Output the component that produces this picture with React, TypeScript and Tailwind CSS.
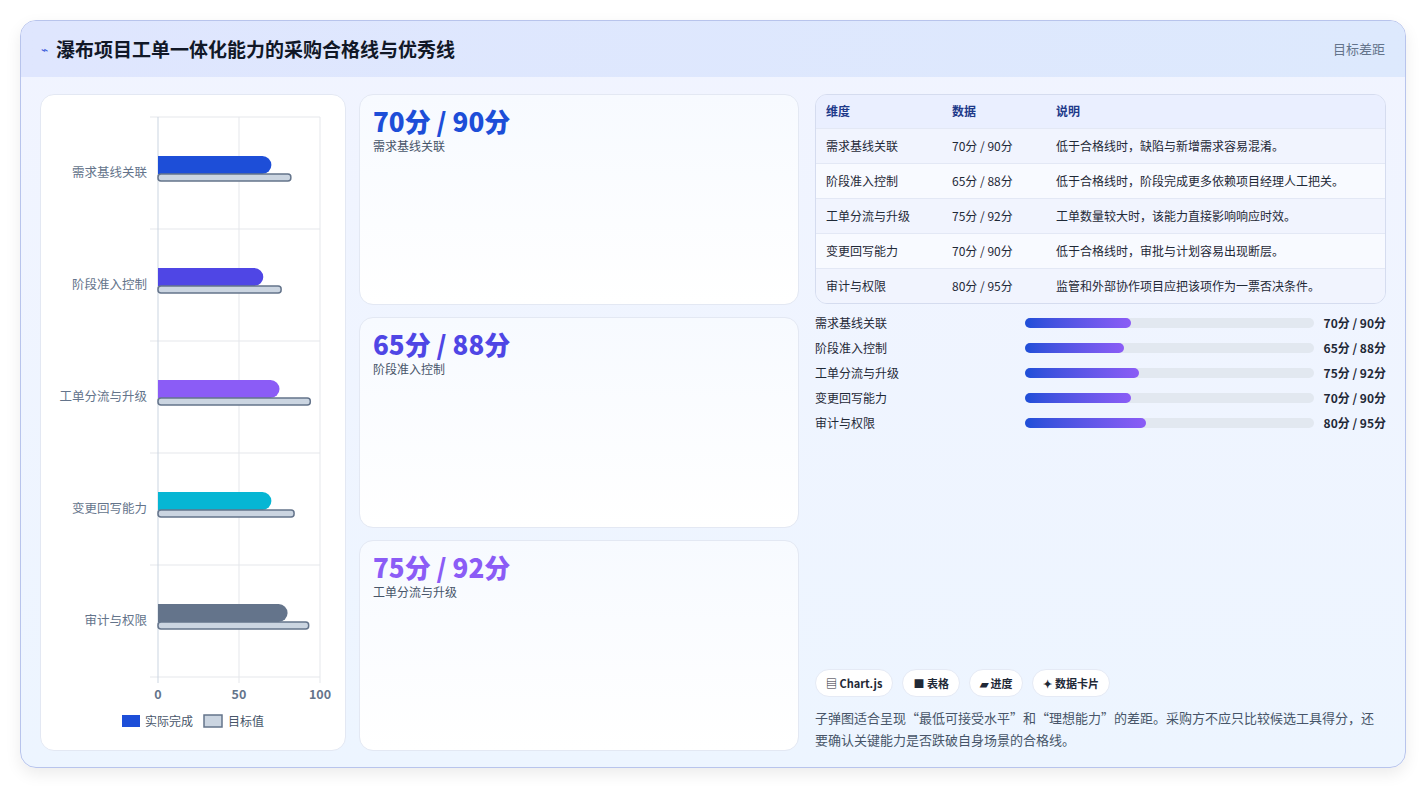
const font = { fontFamily: '"Noto Sans CJK SC", "Noto Sans", sans-serif' }

const rows = [
	{ name: '需求基线关联', data: '70分 / 90分', note: '低于合格线时，缺陷与新增需求容易混淆。', actual: 70, target: 82, color: '#1d4ed8', pct: 36.7 },
	{ name: '阶段准入控制', data: '65分 / 88分', note: '低于合格线时，阶段完成更多依赖项目经理人工把关。', actual: 65, target: 76, color: '#4f46e5', pct: 34.2 },
	{ name: '工单分流与升级', data: '75分 / 92分', note: '工单数量较大时，该能力直接影响响应时效。', actual: 75, target: 94, color: '#8b5cf6', pct: 39.4 },
	{ name: '变更回写能力', data: '70分 / 90分', note: '低于合格线时，审批与计划容易出现断层。', actual: 70, target: 84, color: '#06b6d4', pct: 36.7 },
	{ name: '审计与权限', data: '80分 / 95分', note: '监管和外部协作项目应把该项作为一票否决条件。', actual: 80, target: 93, color: '#64748b', pct: 41.9 },
]

const Chart = () => {
	const x0 = 117
	const w = 162
	const top = 22
	const band = 112
	return (
		<svg width="305" height="655" viewBox="0 0 305 655">
			{[0, 1, 2, 3, 4, 5].map((i) => (
				<line key={i} x1={x0 - 8} x2={x0 + w} y1={top + i * band} y2={top + i * band} stroke="#e5e7eb" />
			))}
			{[0, 0.5, 1].map((f, i) => (
				<line key={i} x1={x0 + f * w} x2={x0 + f * w} y1={top} y2={top + 5 * band + 6} stroke={i === 0 ? '#cbd5e1' : '#e5e7eb'} />
			))}
			{rows.map((r, i) => {
				const cy = top + i * band + 56
				return (
					<g key={r.name}>
						<text x={106} y={cy + 4} textAnchor="end" fontSize="12.5" fill="#64748b">{r.name}</text>
						<path d={`M${x0} ${cy - 17} H${x0 + (r.actual * w) / 100 - 9} a9 9 0 0 1 0 18 H${x0} Z`} fill={r.color} />
						<rect x={x0} y={cy + 1} width={(r.target * w) / 100} height={7} rx={3} fill="#cbd5e1" stroke="#64748b" strokeWidth="1.5" />
					</g>
				)
			})}
			{[0, 50, 100].map((v, i) => (
				<text key={v} x={x0 + (v * w) / 100} y={604} textAnchor="middle" fontSize="12.5" fontWeight="700" fill="#64748b">{v}</text>
			))}
			<rect x={81} y={620} width={18} height={12} fill="#1d4ed8" />
			<text x={104} y={631} fontSize="12" fill="#475569">实际完成</text>
			<rect x={163} y={620} width={18} height={12} fill="#cbd5e1" stroke="#64748b" strokeWidth="1.5" />
			<text x={187} y={631} fontSize="12" fill="#475569">目标值</text>
		</svg>
	)
}

const metrics = [
	{ v: '70分 / 90分', l: '需求基线关联', c: 'text-[#1d4ed8]' },
	{ v: '65分 / 88分', l: '阶段准入控制', c: 'text-[#4f46e5]' },
	{ v: '75分 / 92分', l: '工单分流与升级', c: 'text-[#8b5cf6]' },
]

export default function App() {
	return (
		<div className="h-[786px] w-[1426px] bg-white pt-[20px] pl-[20px]" style={font}>
			<div className="flex h-[748px] w-[1386px] flex-col overflow-hidden rounded-[16px] border border-[#b8c4ec] bg-gradient-to-b from-[#f1f4ff] to-[#edf5ff] shadow-[0_6px_16px_rgba(0,0,0,0.08)]">
				<div className="flex h-[56px] shrink-0 items-center justify-between bg-gradient-to-r from-[#dfe6fe] to-[#dde9fd] px-[20px]">
					<div className="flex items-center gap-[8px]">
						<span className="text-[12px] text-[#3b5bdb]">⌁</span>
						<h1 className="text-[19px] font-bold text-[#111827]">瀑布项目工单一体化能力的采购合格线与优秀线</h1>
					</div>
					<span className="text-[13px] text-[#64748b]">目标差距</span>
				</div>
				<div className="flex flex-1 gap-[13px] p-[19px] pt-[17px]">
					<div className="w-[306px] rounded-[14px] border border-[#e3e8f3] bg-white">
						<Chart />
					</div>
					<div className="flex w-[440px] flex-col gap-[12px]">
						{metrics.map((m) => (
							<div key={m.l} className="flex-1 rounded-[14px] border border-[#e3e8f3] bg-gradient-to-b from-[#f7faff] to-white px-[13px] py-[10px]">
								<div className={`text-[26px] font-extrabold leading-[32px] ${m.c}`}>{m.v}</div>
								<div className="text-[12px] text-[#475569]">{m.l}</div>
							</div>
						))}
					</div>
					<div className="flex flex-1 flex-col pl-[3px]">
						<div className="overflow-hidden rounded-[12px] border border-[#d5dcef]">
							<table className="w-full text-left text-[12px] text-[#1f2937]">
								<thead>
									<tr className="h-[33px] bg-[#eaefff] text-[#1e3a8a]">
										<th className="w-[136px] pl-[10px] font-bold">维度</th>
										<th className="w-[104px] font-bold">数据</th>
										<th className="font-bold">说明</th>
									</tr>
								</thead>
								<tbody>
									{rows.map((r, i) => (
										<tr key={r.name} className={`h-[35px] border-t border-[#e3e8f5] ${i % 2 === 0 ? 'bg-[#f1f4fe]' : 'bg-[#f8faff]'}`}>
											<td className="pl-[10px]">{r.name}</td>
											<td>{r.data}</td>
											<td>{r.note}</td>
										</tr>
									))}
								</tbody>
							</table>
						</div>
						<div className="mt-[10px] flex flex-col gap-[7px]">
							{rows.map((r) => (
								<div key={r.name} className="flex h-[18px] items-center text-[12px] text-[#1f2937]">
									<span className="w-[210px]">{r.name}</span>
									<div className="h-[10px] w-[289px] rounded-full bg-[#e2e8f0]">
										<div className="h-full rounded-full bg-gradient-to-r from-[#1d4ed8] to-[#8b5cf6]" style={{ width: `${r.pct}%` }} />
									</div>
									<span className="flex-1 text-right font-bold">{r.data}</span>
								</div>
							))}
						</div>
						<div className="mt-auto flex gap-[9px]">
							{['▤ Chart.js', '■ 表格', '▰ 进度', '✦ 数据卡片'].map((c) => (
								<span key={c} className="rounded-full border border-[#e5eaf5] bg-white px-[10px] py-[5px] text-[11px] font-bold text-[#1f2937]">{c}</span>
							))}
						</div>
						<p className="mt-[10px] text-[13px] leading-[22px] text-[#475569]">子弹图适合呈现“最低可接受水平”和“理想能力”的差距。采购方不应只比较候选工具得分，还要确认关键能力是否跌破自身场景的合格线。</p>
					</div>
				</div>
			</div>
		</div>
	)
}
